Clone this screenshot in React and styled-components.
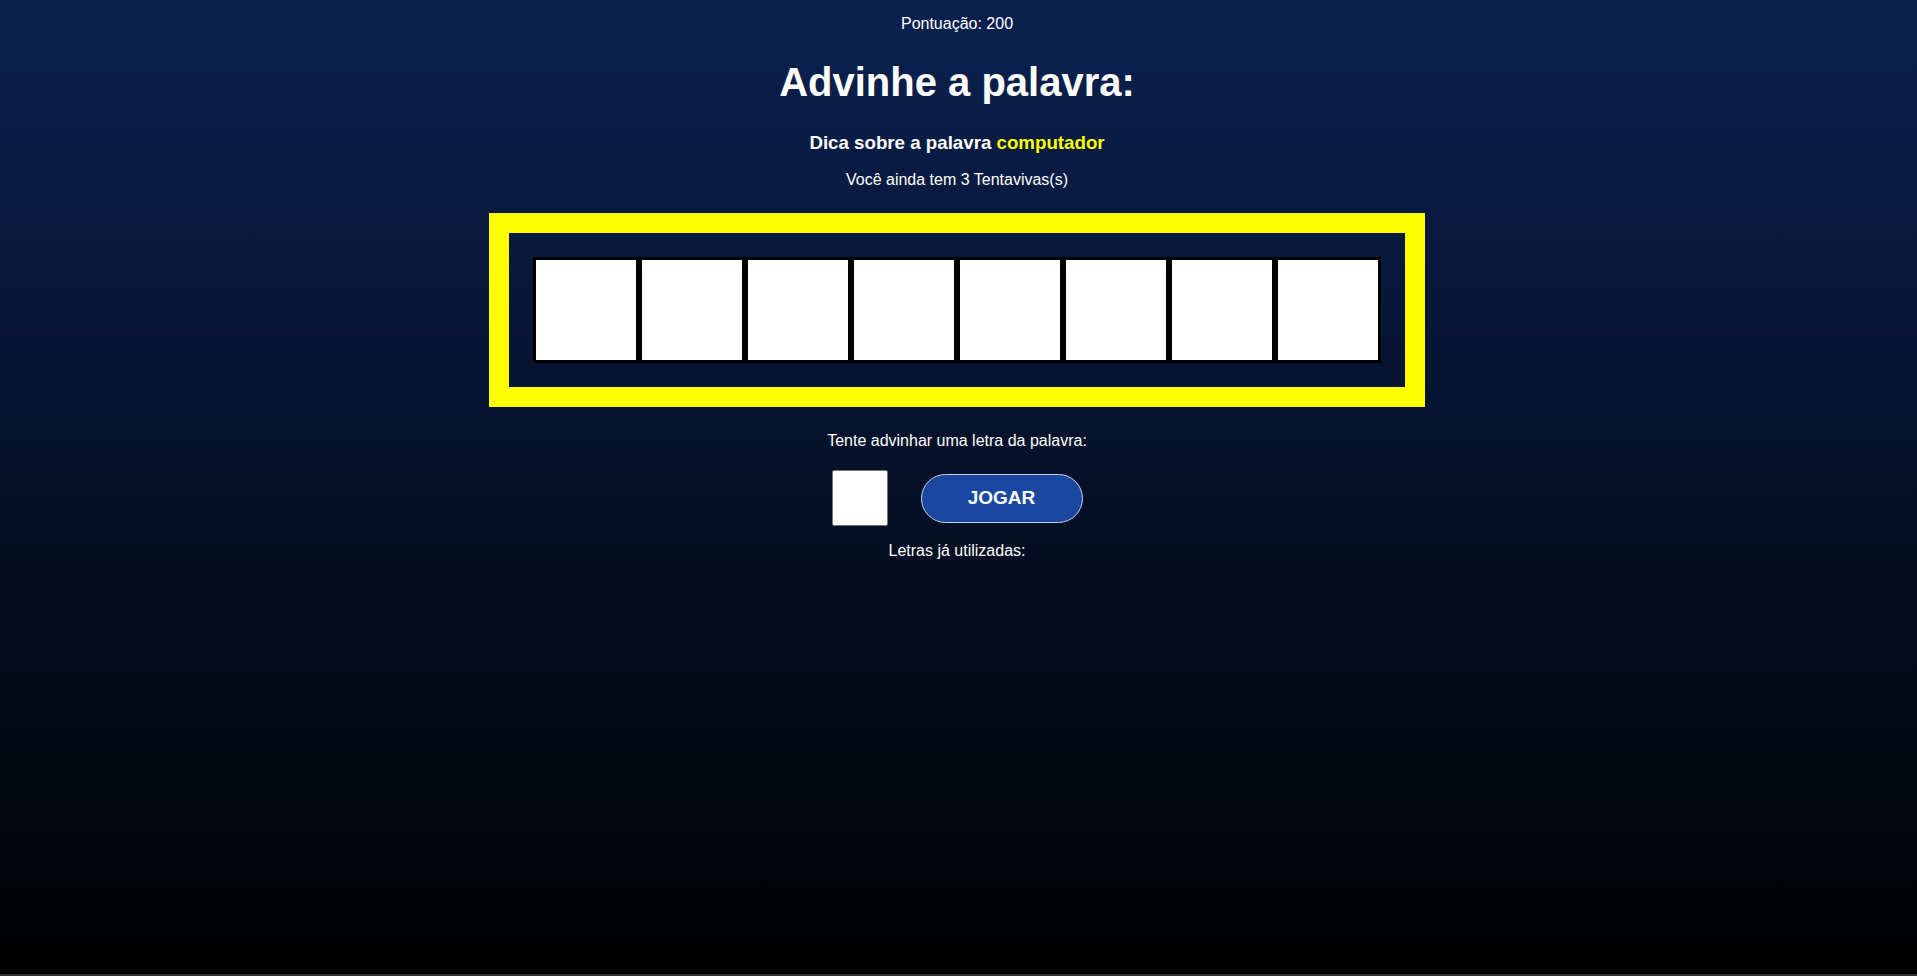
import React, { useState } from "react";
import styled, { createGlobalStyle } from "styled-components";

const GlobalStyle = createGlobalStyle`
  * {
    box-sizing: border-box;
  }
  html, body {
    margin: 0;
    padding: 0;
    background: #2e2e2e;
  }
  body {
    font-family: "Liberation Sans", Arial, sans-serif;
    color: #fff;
  }
`;

const Page = styled.div`
  height: 974px;
  background: linear-gradient(to bottom, #0a2150 0%, #000 100%);
  display: flex;
  flex-direction: column;
  align-items: center;
  padding: 14.5px 3px 0 0;
  text-align: center;
`;

const Score = styled.p`
  margin: 0;
  font-size: 16px;
`;

const Title = styled.h1`
  margin: 27.4px 0 0;
  font-size: 40px;
  font-weight: 700;
`;

const Hint = styled.h3`
  margin: 27px 0 0;
  font-size: 18.72px;
  font-weight: 700;
  span {
    color: #ffff00;
  }
`;

const Tries = styled.p`
  margin: 17.4px 0 0;
  font-size: 16px;
`;

const WordBox = styled.div`
  margin-top: 23.4px;
  display: flex;
  border: 20px solid #ffff00;
  padding: 24px;
`;

const Letter = styled.div`
  width: 106px;
  height: 106px;
  background: #fff;
  border: 3px solid #000;
  display: flex;
  align-items: center;
  justify-content: center;
  color: #000;
  font-size: 48px;
  font-weight: 700;
  text-transform: uppercase;
`;

const Prompt = styled.p`
  margin: 25px 0 0;
  font-size: 16px;
`;

const GuessRow = styled.div`
  margin-top: 20.6px;
  display: flex;
  align-items: center;
  gap: 33px;
`;

const LetterInput = styled.input`
  width: 56px;
  height: 56px;
  border: 1px solid #767676;
  border-radius: 2px;
  background: #fff;
  font-family: inherit;
  font-size: 24px;
  text-align: center;
  text-transform: uppercase;
  outline: none;
`;

const PlayButton = styled.button`
  width: 162px;
  height: 49px;
  border-radius: 25px;
  border: 1px solid #c9d2e3;
  background: #1a47a0;
  color: #fff;
  font-family: inherit;
  font-size: 19px;
  font-weight: 700;
  cursor: pointer;
`;

const Used = styled.p`
  margin: 15.5px 0 0;
  font-size: 16px;
`;

export default function App() {
  const word = "computer";
  const [guess, setGuess] = useState("");
  const [guessed] = useState([]);

  return (
    <>
      <GlobalStyle />
      <Page>
        <Score>Pontuação: 200</Score>
        <Title>Advinhe a palavra:</Title>
        <Hint>
          Dica sobre a palavra <span>computador</span>
        </Hint>
        <Tries>Você ainda tem 3 Tentavivas(s)</Tries>
        <WordBox>
          {word.split("").map((ch, i) => (
            <Letter key={i}>{guessed.includes(ch) ? ch : ""}</Letter>
          ))}
        </WordBox>
        <Prompt>Tente advinhar uma letra da palavra:</Prompt>
        <GuessRow>
          <LetterInput
            maxLength={1}
            value={guess}
            onChange={(e) => setGuess(e.target.value)}
          />
          <PlayButton>JOGAR</PlayButton>
        </GuessRow>
        <Used>Letras já utilizadas:</Used>
      </Page>
    </>
  );
}
